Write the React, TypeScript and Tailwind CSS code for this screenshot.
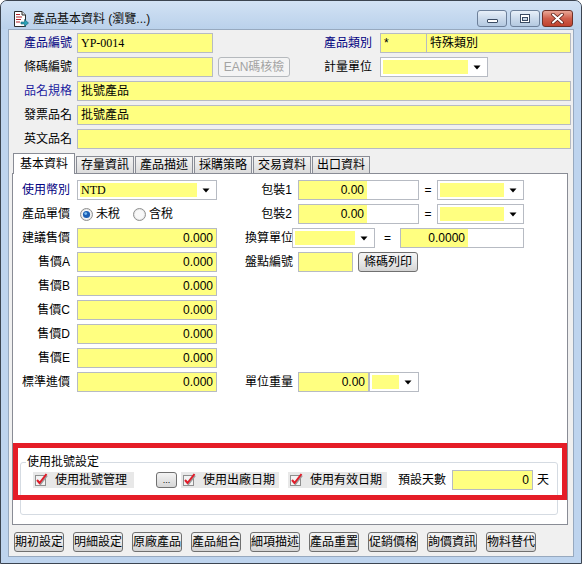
import type { ReactNode } from 'react'

const font = "font-['Liberation_Sans','Noto_Sans_CJK_TC',sans-serif]"

function Arrow() {
  return (
    <svg width="8" height="5" viewBox="0 0 8 5">
      <path d="M0.5 0.5 H7.5 L4 4.5 Z" fill="#000" />
    </svg>
  )
}

function DocIcon() {
  return (
    <svg width="17" height="16" viewBox="0 0 17 16">
      <path d="M2.5 0.5 H10 L13.5 4 V15.5 H2.5 Z" fill="#fff" stroke="#2b2b2b" />
      <path d="M10 0.5 V4 H13.5" fill="#dcdcdc" stroke="#2b2b2b" />
      <path d="M4 3.5h4 M4 6h6 M4 8.5h5 M4 11h4" stroke="#b3262c" strokeWidth="1.2" />
      <path d="M9 11h3.5v-2.5l4 3.5-4 3.5v-2.5H9z" fill="#2aa3b8" stroke="#16606e" strokeWidth="0.6" />
    </svg>
  )
}

function Check() {
  return (
    <svg width="15" height="14" viewBox="0 0 15 14">
      <rect x="1.5" y="2.5" width="10" height="10" fill="#f3f3f3" stroke="#8f8f8f" />
      <path d="M4 8 L6.5 11 L13 2.5" fill="none" stroke="#9c9c9c" strokeWidth="2" />
      <path d="M3 7 L5.5 10 L12.5 1" fill="none" stroke="#e11d2a" strokeWidth="2" />
    </svg>
  )
}

function Radio({ on }: { on?: boolean }) {
  return (
    <svg width="13" height="13" viewBox="0 0 13 13">
      <circle cx="6.5" cy="6.5" r="6" fill="#e8e8e8" stroke="#8e8f8f" />
      <circle cx="6.5" cy="6.5" r="4.5" fill="#f8f8f8" />
      {on && <circle cx="6.5" cy="6.5" r="3.6" fill="#1c5fb4" />}
      {on && <circle cx="5.7" cy="5.6" r="1.4" fill="#7dc0f2" />}
    </svg>
  )
}

function Box({ w, children, right, serif }: { w: string; children?: ReactNode; right?: boolean; serif?: boolean }) {
  return (
    <div
      className={`${w} h-[20px] shrink-0 border border-[#b7bbc3] bg-[#ffff80] flex items-center px-[3px] text-[12px] whitespace-nowrap ${
        right ? 'justify-end' : ''
      } ${serif ? "font-['Liberation_Serif','Noto_Sans_CJK_TC',serif]" : ''}`}
    >
      {children}
    </div>
  )
}

function Split({ w, yw, children }: { w: string; yw: string; children?: ReactNode }) {
  return (
    <div className={`${w} h-[20px] shrink-0 border border-[#b7bbc3] bg-white flex text-[12px]`}>
      <div className={`${yw} h-full bg-[#ffff80] flex items-center justify-end px-[3px]`}>{children}</div>
    </div>
  )
}

function Combo({ w, children, serif }: { w: string; children?: ReactNode; serif?: boolean }) {
  return (
    <div className={`${w} h-[20px] shrink-0 border border-[#b7bbc3] bg-white flex p-[2px] text-[12px]`}>
      <div
        className={`flex-1 h-full bg-[#ffff80] flex items-center px-[1px] ${
          serif ? "font-['Liberation_Serif','Noto_Sans_CJK_TC',serif]" : ''
        }`}
      >
        {children}
      </div>
      <div className="w-[17px] flex items-center justify-center">
        <Arrow />
      </div>
    </div>
  )
}

function Btn({ w, children, disabled }: { w: string; children: ReactNode; disabled?: boolean }) {
  return (
    <div
      className={`${w} h-[20px] shrink-0 rounded-[3px] border flex items-center justify-center text-[12px] whitespace-nowrap ${
        disabled
          ? 'border-[#b5b9bd] bg-[#f4f4f4] text-[#a3a3a3]'
          : 'border-[#707070] bg-gradient-to-b from-[#f4f4f4] via-[#e9e9e9] to-[#d3d3d3] text-black'
      }`}
    >
      {children}
    </div>
  )
}

function TopLabel({ w, blue, children }: { w: string; blue?: boolean; children: ReactNode }) {
  return (
    <div className={`${w} shrink-0 text-right text-[12px] ${blue ? 'text-[#000080]' : 'text-black'}`}>{children}</div>
  )
}

function LeftRow({ label, blue, children, right }: { label: string; blue?: boolean; children: ReactNode; right?: ReactNode }) {
  return (
    <div className="h-[20px] flex items-center">
      <div className={`w-[57px] shrink-0 text-right text-[12px] ${blue ? 'text-[#000080]' : 'text-black'}`}>{label}</div>
      <div className="ml-[7px] w-[140px] shrink-0 flex items-center">{children}</div>
      {right}
    </div>
  )
}

function RightPart({ label, children, tight }: { label: string; children: ReactNode; tight?: boolean }) {
  return (
    <div className="ml-[28px] flex items-center">
      <div className="w-[47px] shrink-0 text-right text-[12px] whitespace-nowrap">{label}</div>
      <div className={`${tight ? 'ml-0' : 'ml-[6px]'} flex items-center`}>{children}</div>
    </div>
  )
}

function Eq({ w }: { w: string }) {
  return <div className={`${w} shrink-0 text-center text-[12px]`}>=</div>
}

function CapBtn({ w, children, close }: { w: string; children: ReactNode; close?: boolean }) {
  return (
    <div
      className={`${w} h-[17px] rounded-[3px] border flex items-center justify-center ${
        close
          ? 'border-[#6e3128] bg-gradient-to-b from-[#e9a797] via-[#cf5f4c] to-[#c0412e]'
          : 'border-[#6d809a] bg-gradient-to-b from-[#e8f0f9] via-[#cbdaeb] to-[#b4c9e1]'
      }`}
    >
      {children}
    </div>
  )
}

const tabs = ['存量資訊', '產品描述', '採購策略', '交易資料', '出口資料']
const bottomButtons = ['期初設定', '明細設定', '原廠產品', '產品組合', '細項描述', '產品重置', '促銷價格', '詢價資訊', '物料替代']
const prices = ['售價A', '售價B', '售價C', '售價D', '售價E']

export default function App() {
  return (
    <div
      className={`${font} w-[582px] h-[564px] flex flex-col border border-[#3b4450] rounded-t-[7px] bg-[#bed4ee] text-black overflow-hidden`}
    >
      {/* title bar */}
      <div className="h-[28px] shrink-0 flex items-start bg-gradient-to-b from-[#d2e2f4] to-[#bad1eb] pl-[11px] pr-[8px]">
        <div className="mt-[9px] flex items-center gap-[4px]">
          <DocIcon />
          <span className="text-[12px] text-[#111]">產品基本資料 (瀏覽...)</span>
        </div>
        <div className="ml-auto mt-[9px] flex">
          <CapBtn w="w-[30px]">
            <div className="w-[11px] h-[4px] mt-[5px] rounded-[1px] border border-[#3a4b63] bg-white" />
          </CapBtn>
          <div className="ml-[3px]">
            <CapBtn w="w-[30px]">
              <div className="w-[10px] h-[9px] border border-[#3a4b63] bg-white flex items-center justify-center">
                <div className="w-[6px] h-[4px] border border-[#3a4b63] bg-[#c8d6e6]" />
              </div>
            </CapBtn>
          </div>
          <div className="ml-[2px]">
            <CapBtn w="w-[31px]" close>
              <svg width="13" height="11" viewBox="0 0 13 11">
                <path d="M2 1.5 L11 9.5 M11 1.5 L2 9.5" stroke="#5a1e16" strokeWidth="3.6" strokeLinecap="round" />
                <path d="M2 1.5 L11 9.5 M11 1.5 L2 9.5" stroke="#fff" strokeWidth="2" strokeLinecap="round" />
              </svg>
            </CapBtn>
          </div>
        </div>
      </div>

      {/* client area */}
      <div className="mx-[7px] h-[528px] shrink-0 border border-[#97a9bf] bg-[#f0f0f0] pt-[3px] flex flex-col">
        <div className="flex flex-col gap-[4px]">
          <div className="h-[20px] flex items-center">
            <TopLabel w="w-[63px]" blue>產品編號</TopLabel>
            <div className="ml-[5px]">
              <Box w="w-[136px]" serif>YP-0014</Box>
            </div>
            <TopLabel w="w-[159px]" blue>產品類別</TopLabel>
            <div className="ml-[8px] w-[191px] h-[20px] border border-[#b7bbc3] bg-[#ffff80] flex text-[12px]">
              <div className="w-[46px] h-full border-r border-[#b7bbc3] px-[3px] flex items-center">*</div>
              <div className="flex-1 px-[3px] flex items-center">特殊類別</div>
            </div>
          </div>
          <div className="h-[20px] flex items-center">
            <TopLabel w="w-[63px]">條碼編號</TopLabel>
            <div className="ml-[5px]">
              <Box w="w-[136px]" />
            </div>
            <div className="ml-[5px]">
              <Btn w="w-[72px]" disabled>
                EAN碼核檢
              </Btn>
            </div>
            <TopLabel w="w-[82px]">計量單位</TopLabel>
            <div className="ml-[8px]">
              <Combo w="w-[108px]" />
            </div>
          </div>
          <div className="h-[20px] flex items-center">
            <TopLabel w="w-[63px]">
              <span className="text-[#1c1ca0]">品名規格</span>
            </TopLabel>
            <div className="ml-[5px]">
              <Box w="w-[494px]">批號產品</Box>
            </div>
          </div>
          <div className="h-[20px] flex items-center">
            <TopLabel w="w-[63px]">發票品名</TopLabel>
            <div className="ml-[5px]">
              <Box w="w-[494px]">批號產品</Box>
            </div>
          </div>
          <div className="h-[20px] flex items-center">
            <TopLabel w="w-[63px]">英文品名</TopLabel>
            <div className="ml-[5px]">
              <Box w="w-[494px]" />
            </div>
          </div>
        </div>

        {/* tabs */}
        <div className="ml-[3px] mt-[4px] w-[556px]">
          <div className="flex items-end pl-[1px] h-[20px]">
            <div className="relative z-10 w-[62px] h-[21px] -mb-[1px] border border-b-0 border-[#898c95] bg-white flex items-center justify-center text-[12px] pb-[1px]">
              基本資料
            </div>
            {tabs.map((t) => (
              <div
                key={t}
                className="ml-[1px] w-[58px] h-[17px] border border-b-0 border-[#898c95] bg-gradient-to-b from-[#f3f3f3] to-[#dcdcdc] flex items-center justify-center text-[12px]"
              >
                {t}
              </div>
            ))}
          </div>

          <div className="relative h-[352px] border border-[#898c95] bg-white pt-[6px] flex flex-col">
            <div className="flex flex-col gap-[4px]">
              <LeftRow
                label="使用幣別"
                blue
                right={
                  <RightPart label="包裝1">
                    <Split w="w-[121px]" yw="w-[68px]">
                      0.00
                    </Split>
                    <Eq w="w-[18px]" />
                    <Combo w="w-[87px]" />
                  </RightPart>
                }
              >
                <Combo w="w-[140px]" serif>
                  NTD
                </Combo>
              </LeftRow>
              <LeftRow
                label="產品單價"
                right={
                  <RightPart label="包裝2">
                    <Split w="w-[121px]" yw="w-[68px]">
                      0.00
                    </Split>
                    <Eq w="w-[18px]" />
                    <Combo w="w-[87px]" />
                  </RightPart>
                }
              >
                <div className="flex items-center text-[12px] ml-[3px]">
                  <Radio on />
                  <span className="ml-[3px]">未稅</span>
                  <span className="ml-[13px]">
                    <Radio />
                  </span>
                  <span className="ml-[3px]">含稅</span>
                </div>
              </LeftRow>
              <LeftRow
                label="建議售價"
                right={
                  <RightPart label="換算單位" tight>
                    <Combo w="w-[83px]" />
                    <Eq w="w-[25px]" />
                    <Split w="w-[124px]" yw="w-[67px]">
                      0.0000
                    </Split>
                  </RightPart>
                }
              >
                <Box w="w-[140px]" right>
                  0.000
                </Box>
              </LeftRow>
              <LeftRow
                label={prices[0]}
                right={
                  <RightPart label="盤點編號">
                    <Box w="w-[55px]" />
                    <div className="ml-[5px]">
                      <Btn w="w-[60px]">條碼列印</Btn>
                    </div>
                  </RightPart>
                }
              >
                <Box w="w-[140px]" right>
                  0.000
                </Box>
              </LeftRow>
              {prices.slice(1).map((p) => (
                <LeftRow key={p} label={p}>
                  <Box w="w-[140px]" right>
                    0.000
                  </Box>
                </LeftRow>
              ))}
              <LeftRow
                label="標準進價"
                right={
                  <RightPart label="單位重量">
                    <Box w="w-[71px]" right>
                      0.00
                    </Box>
                    <Combo w="w-[50px]" />
                  </RightPart>
                }
              >
                <Box w="w-[140px]" right>
                  0.000
                </Box>
              </LeftRow>
            </div>

            {/* batch settings */}
            <fieldset className="mt-[63px] ml-[7px] mr-[9px] border border-[#d5dbe2] rounded-[3px] pl-[5px] pb-[24px]">
              <legend className="px-[1px] text-[12px] leading-[14px]">使用批號設定</legend>
              <div className="mt-[1px] h-[20px] flex items-center text-[12px] whitespace-nowrap">
                <div className="ml-[7px] w-[101px] h-[16px] bg-[#e8e8e8] flex items-center pl-[1px]">
                  <Check />
                  <span className="ml-[6px]">使用批號管理</span>
                </div>
                <div className="ml-[22px] w-[21px] h-[16px] rounded-[3px] border border-[#707070] bg-gradient-to-b from-[#f4f4f4] to-[#d6d6d6] flex items-end justify-center text-[9px] leading-[10px] pb-[2px]">
                  ...
                </div>
                <div className="ml-[4px] w-[98px] h-[16px] bg-[#e8e8e8] flex items-center pl-[1px]">
                  <Check />
                  <span className="ml-[6px]">使用出廠日期</span>
                </div>
                <div className="ml-[9px] w-[99px] h-[16px] bg-[#e8e8e8] flex items-center pl-[1px]">
                  <Check />
                  <span className="ml-[6px]">使用有效日期</span>
                </div>
                <span className="ml-[11px] w-[48px]">預設天數</span>
                <div className="ml-[6px]">
                  <Box w="w-[81px]" right>
                    0
                  </Box>
                </div>
                <span className="ml-[4px]">天</span>
              </div>
            </fieldset>

            <div className="absolute left-0 top-[269px] w-[554px] h-[57px] border-[5px] border-[#e51d27]" />
          </div>
        </div>

        {/* bottom buttons */}
        <div className="ml-[5px] mt-[7px] flex gap-[9px]">
          {bottomButtons.map((b) => (
            <Btn key={b} w="w-[50px]">
              {b}
            </Btn>
          ))}
        </div>
      </div>
    </div>
  )
}
